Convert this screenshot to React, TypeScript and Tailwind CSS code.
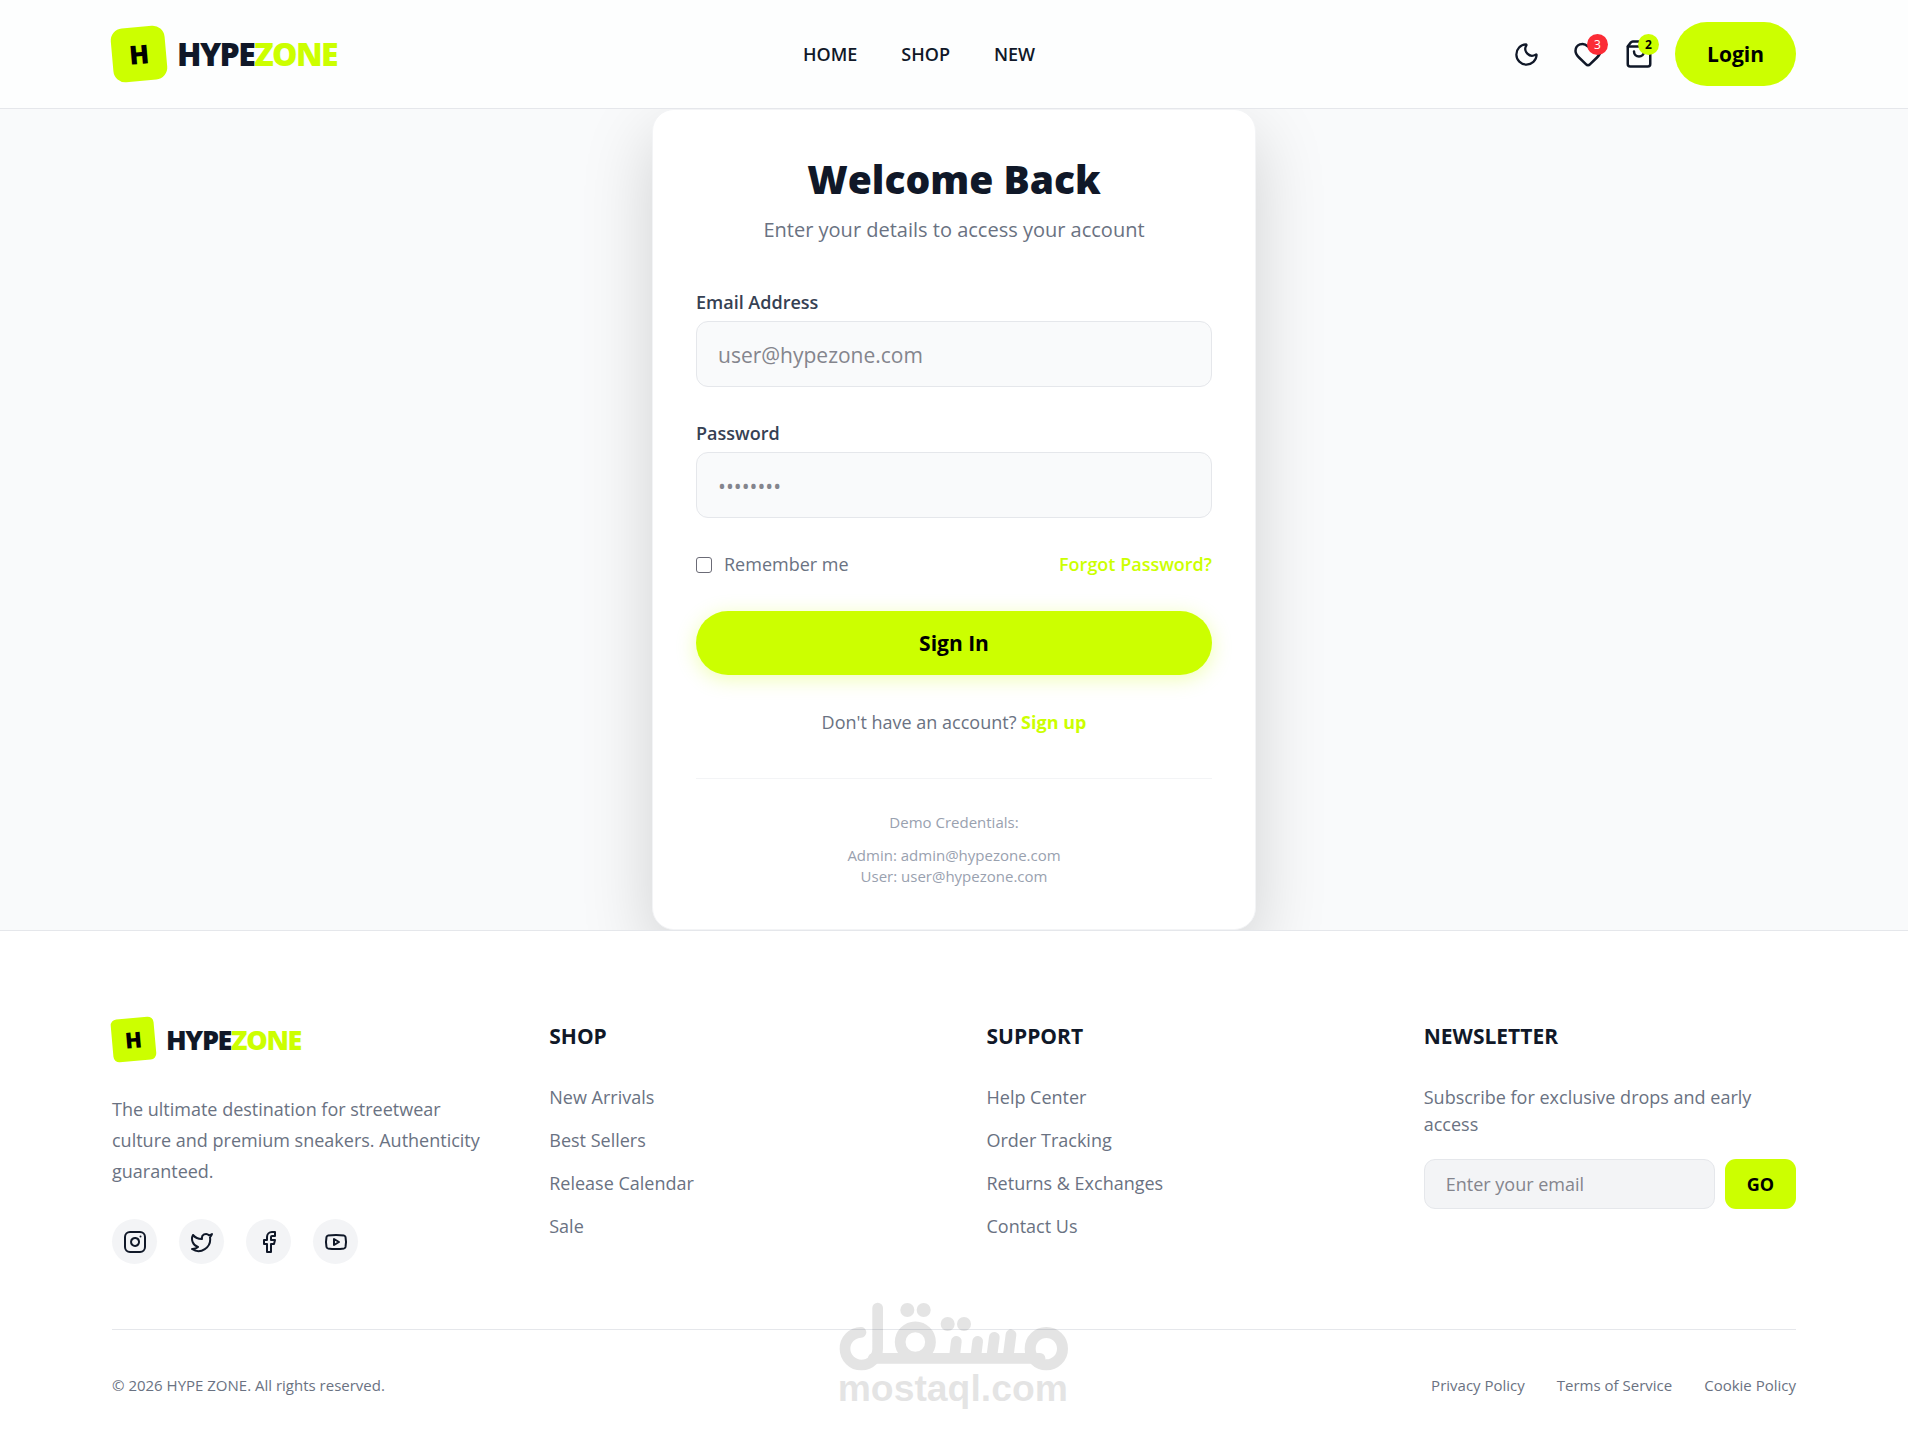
import type { ReactNode } from "react";
import { Facebook, Heart, Instagram, Moon, ShoppingBag, Twitter, Youtube } from "lucide-react";

const navLinks = ["HOME", "SHOP", "NEW"];
const shopLinks = ["New Arrivals", "Best Sellers", "Release Calendar", "Sale"];
const supportLinks = ["Help Center", "Order Tracking", "Returns & Exchanges", "Contact Us"];
const legalLinks = ["Privacy Policy", "Terms of Service", "Cookie Policy"];
const socials = [
  { label: "Instagram", Icon: Instagram },
  { label: "Twitter", Icon: Twitter },
  { label: "Facebook", Icon: Facebook },
  { label: "YouTube", Icon: Youtube },
];

function Header() {
  return (
    <header className="border-b border-gray-200 bg-[#fdfefe]">
      <div className="flex items-center justify-between px-28 py-[22px]">
        <a href="#" className="flex items-center gap-[11px]">
          <span className="flex size-[54px] -rotate-5 items-center justify-center rounded-xl bg-[#ccff00] text-[26px] font-extrabold text-black">
            H
          </span>
          <span className="text-[32px] leading-10 font-extrabold tracking-tighter">
            HYPE<span className="text-[#ccff00]">ZONE</span>
          </span>
        </a>
        <nav className="flex gap-11 text-lg font-semibold">
          {navLinks.map((label) => (
            <a key={label} href="#">
              {label}
            </a>
          ))}
        </nav>
        <div className="flex items-center gap-[21px]">
          <button type="button" aria-label="Toggle dark mode" className="p-3">
            <Moon size={27} />
          </button>
          <a href="#" aria-label="Wishlist" className="relative">
            <Heart size={30} />
            <span className="absolute -top-[5px] -right-[5px] flex size-[21px] items-center justify-center rounded-full bg-[#fb2c36] text-xs text-white">
              3
            </span>
          </a>
          <a href="#" aria-label="Cart" className="relative">
            <ShoppingBag size={30} />
            <span className="absolute -top-[5px] -right-[5px] flex size-[21px] items-center justify-center rounded-full bg-[#ccff00] text-xs font-bold text-black">
              2
            </span>
          </a>
          <button type="button" className="h-16 rounded-full bg-[#ccff00] px-8 pt-0.5 text-[21px] font-bold text-black">
            Login
          </button>
        </div>
      </div>
    </header>
  );
}

function Field({ id, label, type, placeholder }: { id: string; label: string; type: string; placeholder: string }) {
  return (
    <div>
      <label htmlFor={id} className="block text-lg leading-7 font-semibold text-[#364153]">
        {label}
      </label>
      <input
        id={id}
        type={type}
        placeholder={placeholder}
        className="mt-[5px] block h-[66px] w-full rounded-xl border border-gray-200 bg-gray-50 px-[21px] pt-0.5 text-[21px] placeholder:text-[#84858d]"
      />
    </div>
  );
}

function LoginCard() {
  return (
    <main className="flex justify-center overflow-hidden bg-gray-50">
      <div className="w-full max-w-[604px] rounded-[22px] border border-gray-100 bg-white px-[43px] py-[42px] shadow-[0_25px_70px_rgba(0,0,0,0.17)]">
        <h1 className="text-center text-[39px] leading-[54px] font-extrabold">Welcome Back</h1>
        <p className="mt-2 text-center text-xl leading-8 text-[#6a7282]">Enter your details to access your account</p>
        <form className="mt-[42px]" onSubmit={(e) => e.preventDefault()}>
          <div className="flex flex-col gap-8">
            <Field id="email" label="Email Address" type="email" placeholder="user@hypezone.com" />
            <Field id="password" label="Password" type="password" placeholder="••••••••" />
            <div className="flex items-center justify-between text-lg leading-[29px]">
              <label className="flex items-center gap-3 text-[#6a7282]">
                <input
                  type="checkbox"
                  className="size-4 appearance-none rounded-[3px] border border-[#6b6b76] bg-white checked:bg-[#ccff00]"
                />
                Remember me
              </label>
              <a href="#" className="font-semibold text-[#ccff00]">
                Forgot Password?
              </a>
            </div>
            <button
              type="submit"
              className="h-16 rounded-full bg-[#ccff00] pt-0.5 text-[21px] font-bold text-black shadow-[0_4px_20px_rgba(204,255,0,0.3)]"
            >
              Sign In
            </button>
          </div>
        </form>
        <p className="mt-[33px] text-center text-lg leading-7 text-[#6a7282]">
          Don't have an account?{" "}
          <a href="#" className="font-bold text-[#ccff00]">
            Sign up
          </a>
        </p>
        <div className="mt-[42px] border-t border-gray-100 pt-[33px] text-center text-[15px] leading-[21px] text-[#99a1af]">
          <p>Demo Credentials:</p>
          <p className="mt-3">Admin: admin@hypezone.com</p>
          <p>User: user@hypezone.com</p>
        </div>
      </div>
    </main>
  );
}

function FooterColumn({ title, children }: { title: string; children: ReactNode }) {
  return (
    <section>
      <h2 className="text-[21px] leading-9 font-bold">{title}</h2>
      <div className="mt-[30px] text-lg leading-[27px] text-[#6a7282]">{children}</div>
    </section>
  );
}

function LinkList({ items }: { items: string[] }) {
  return (
    <ul className="flex flex-col gap-4">
      {items.map((item) => (
        <li key={item}>
          <a href="#">{item}</a>
        </li>
      ))}
    </ul>
  );
}

function MostaqlMark() {
  return (
    <svg
      viewBox="12 0 900 420"
      className="pointer-events-none absolute bottom-[18px] left-1/2 h-[140px] w-[300px] -translate-x-1/2 opacity-10"
      aria-hidden="true"
    >
      <g fill="none" stroke="#000" strokeWidth="32" strokeLinecap="round">
        <path d="M183 157A49 49 0 1 0 233 206V84" />
        <path d="M220 235H720" />
        <circle cx="346" cy="186" r="45.5" />
        <circle cx="739" cy="206" r="48.5" strokeWidth="33" />
        <path d="M469 184L464 225M533 184L528 225M583 172L576 225M633 164L625 225" />
      </g>
      <g fill="#000">
        <circle cx="322" cy="90" r="21" />
        <circle cx="371" cy="90" r="21" />
        <circle cx="443" cy="132" r="21" />
        <circle cx="492" cy="132" r="21" />
        <text x="113" y="362" fontSize="112" fontWeight="700" fontFamily="Liberation Sans, sans-serif">
          mostaql.com
        </text>
      </g>
    </svg>
  );
}

function Footer() {
  return (
    <footer className="relative border-t border-gray-200 bg-white px-28 pt-[87px] pb-[42px]">
      <div className="grid grid-cols-4 gap-[65px]">
        <div>
          <a href="#" className="flex items-center gap-[11px]">
            <span className="flex size-[43px] -rotate-5 items-center justify-center rounded-md bg-[#ccff00] text-[22px] font-extrabold text-black">
              H
            </span>
            <span className="text-[27px] leading-10 font-extrabold tracking-tighter">
              HYPE<span className="text-[#ccff00]">ZONE</span>
            </span>
          </a>
          <p className="mt-[33px] text-lg leading-[31px] text-[#6a7282]">
            The ultimate destination for streetwear culture and premium sneakers. Authenticity guaranteed.
          </p>
          <div className="mt-8 flex gap-[22px]">
            {socials.map(({ label, Icon }) => (
              <a
                key={label}
                href="#"
                aria-label={label}
                className="flex size-[45px] items-center justify-center rounded-full bg-gray-100"
              >
                <Icon size={24} />
              </a>
            ))}
          </div>
        </div>
        <FooterColumn title="SHOP">
          <LinkList items={shopLinks} />
        </FooterColumn>
        <FooterColumn title="SUPPORT">
          <LinkList items={supportLinks} />
        </FooterColumn>
        <FooterColumn title="NEWSLETTER">
          <p>Subscribe for exclusive drops and early access</p>
          <form className="mt-[21px] flex gap-[10px]" onSubmit={(e) => e.preventDefault()}>
            <input
              type="email"
              aria-label="Email for newsletter"
              placeholder="Enter your email"
              className="h-[50px] min-w-0 flex-1 rounded-[11px] border border-gray-200 bg-gray-100 px-[21px] placeholder:text-[#84858d]"
            />
            <button type="submit" className="h-[50px] rounded-[11px] bg-[#ccff00] px-[22px] font-bold text-black">
              GO
            </button>
          </form>
        </FooterColumn>
      </div>
      <div className="mt-[65px] flex items-center justify-between border-t border-gray-200 pt-11 text-[15px] leading-[22px] text-[#6a7282]">
        <p>© 2026 HYPE ZONE. All rights reserved.</p>
        <div className="flex gap-8">
          {legalLinks.map((label) => (
            <a key={label} href="#">
              {label}
            </a>
          ))}
        </div>
      </div>
      <MostaqlMark />
    </footer>
  );
}

export default function App() {
  return (
    <div className="min-h-screen bg-white font-['Open_Sans',sans-serif] text-[#101828]">
      <Header />
      <LoginCard />
      <Footer />
    </div>
  );
}
